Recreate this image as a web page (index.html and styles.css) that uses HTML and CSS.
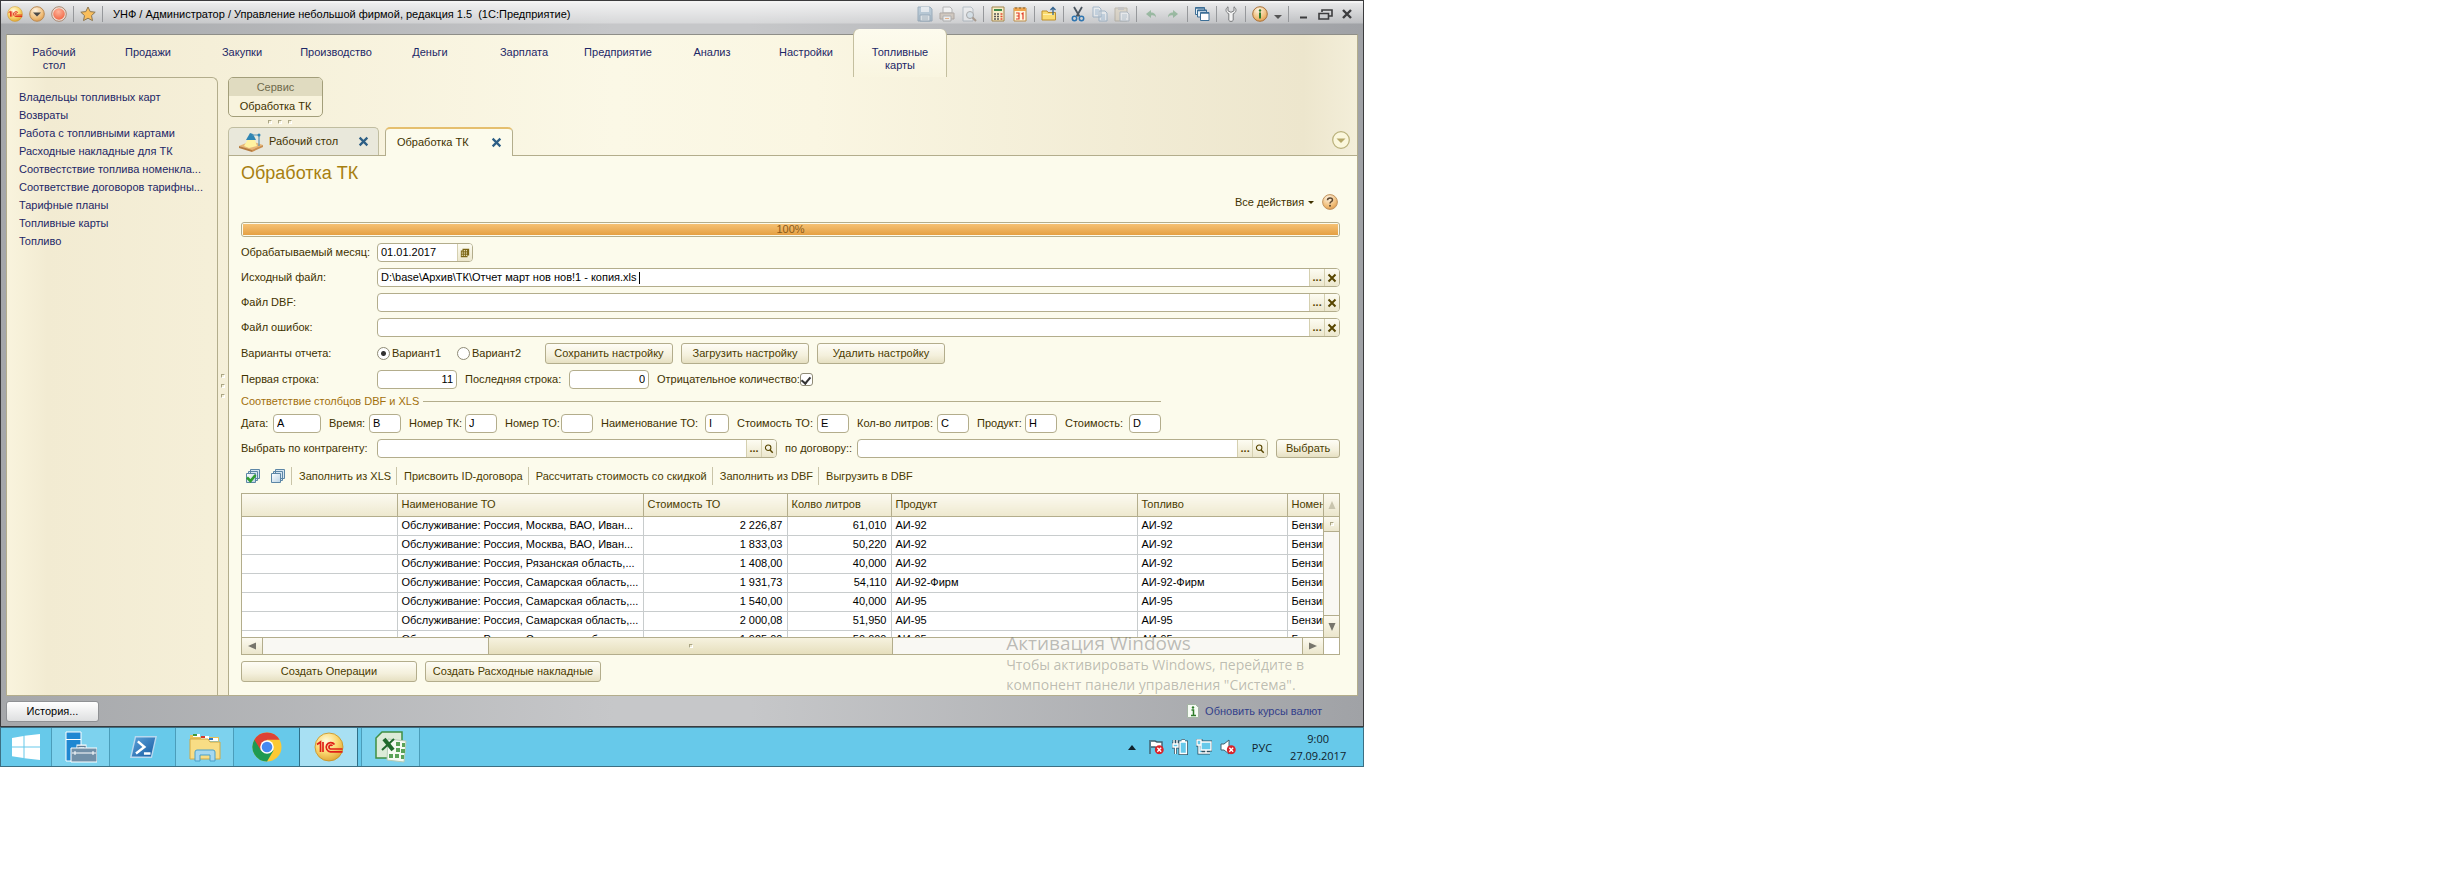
FILE: index.html
```html
<!DOCTYPE html>
<html lang="ru">
<head>
<meta charset="utf-8">
<title>УНФ / Администратор / Управление небольшой фирмой</title>
<link rel="stylesheet" href="styles.css">
</head>
<body>
<svg class="defs" aria-hidden="true">
  <defs>
    <radialGradient id="gold" cx=".4" cy=".3" r=".8"><stop offset="0" stop-color="#fffbe0"/><stop offset=".5" stop-color="#fbd870"/><stop offset="1" stop-color="#d99a28"/></radialGradient>
    <radialGradient id="amber" cx=".4" cy=".25" r=".9"><stop offset="0" stop-color="#fdf3e2"/><stop offset=".6" stop-color="#f0bd78"/><stop offset="1" stop-color="#d48a3c"/></radialGradient>
    <radialGradient id="red" cx=".45" cy=".3" r=".8"><stop offset="0" stop-color="#ffb49a"/><stop offset="1" stop-color="#ee5d3c"/></radialGradient>
    <linearGradient id="blue" x2="1" y2="1"><stop offset="0" stop-color="#5fa5dc"/><stop offset="1" stop-color="#1458a0"/></linearGradient>
    <linearGradient id="sheet" x2="1" y2="1"><stop offset="0" stop-color="#fff"/><stop offset="1" stop-color="#b9d2e4"/></linearGradient>
    <symbol id="i-cross" viewBox="0 0 10 10"><path d="M1.5 1.5l7 7M8.500 1.500l-7 7" fill="none" stroke="currentColor" stroke-width="2"/></symbol>
    <symbol id="i-lens" viewBox="0 0 12 12"><circle cx="5" cy="4.500" r="3.300" fill="none" stroke="currentColor" stroke-width="1.300"/><path d="M7 7l3.500 3.500" stroke="currentColor" stroke-width="1.800"/></symbol>
    <symbol id="i-err" viewBox="0 0 10 10"><circle cx="5" cy="5" r="4.700" fill="#d8232a"/><path d="M3 3l4 4M7 3L3 7" stroke="#fff" stroke-width="1.500"/></symbol>
    <symbol id="i-1c" viewBox="0 0 30 30"><circle cx="15" cy="15" r="14" fill="url(#gold)" stroke="#c88f20" stroke-width=".8"/><path d="M3 12.500l3.500-2.500v10M9 10v10M20.500 12.500a4.600 4.600 0 1 0-4 7.300h12M18.500 13.800a2 2 0 1 0-2 3.200h12" fill="none" stroke="#e02018" stroke-width="1.700"/></symbol>
  </defs>
</svg>

<div class="desktop">
  <div class="window">
    <header class="titlebar">
      <button class="tb" aria-label="1С"><svg viewBox="0 0 30 30"><use href="#i-1c"/></svg></button>
      <button class="tb" aria-label="Меню"><svg viewBox="0 0 16 16"><circle cx="8" cy="8" r="7.300" fill="url(#amber)" stroke="#b98a55"/><path d="M4 6.500h8L8 10.500z" fill="#4b4a48"/></svg></button>
      <button class="tb" aria-label="Остановить"><svg viewBox="0 0 16 16"><circle cx="8" cy="8" r="7.300" fill="#eee3da" stroke="#a8866f"/><circle cx="8" cy="8" r="5.800" fill="url(#red)"/></svg></button>
      <i class="tsep"></i>
      <button class="tb" aria-label="Избранное"><svg viewBox="0 0 16 16"><path d="M8 1l2.200 4.600 5 .6-3.700 3.400 1 5L8 12.200 3.500 14.600l1-5L.8 6.200l5-.6z" fill="#f9be5c" stroke="#8d7752"/></svg></button>
      <i class="tsep"></i>
      <h1 class="apptitle">УНФ / Администратор / Управление небольшой фирмой, редакция 1.5&nbsp; (1С:Предприятие)</h1>
      <button class="tb dim" aria-label="Сохранить"><svg viewBox="0 0 16 16"><path d="M1 1h12l2 2v12H1z" fill="#8fb0c8" stroke="#587b96"/><path d="M4 1h8v5H4z" fill="#e5eef5"/><path d="M3 9h10v6H3z" fill="#dfe8ee" stroke="#587b96"/><path d="M5 11h6M5 13h6" stroke="#7894a8"/></svg></button>
      <button class="tb dim" aria-label="Печать"><svg viewBox="0 0 16 16"><path d="M4 1h7l2 2v4H4z" fill="#fff" stroke="#888"/><path d="M1 7h14v6H1z" fill="#c6b5a3" stroke="#85776a"/><path d="M4 10h8v5H4z" fill="#fff" stroke="#888"/><path d="M6 12.500h4" stroke="#f08a38"/></svg></button>
      <button class="tb dim" aria-label="Просмотр"><svg viewBox="0 0 16 16"><path d="M2 1h8l2 2v12H2z" fill="#f1f3f5" stroke="#8a9aa8"/><circle cx="9" cy="9" r="3.500" fill="#cfe2ee" stroke="#777"/><path d="M11.500 11.500L15 15" stroke="#80644a" stroke-width="2"/></svg></button>
      <i class="tsep"></i>
      <button class="tb" aria-label="Калькулятор"><svg viewBox="0 0 16 16"><path d="M2 1h12v14H2z" fill="#f8edc6" stroke="#a2854e"/><path d="M4 3h8v2H4z" fill="#3f8a4a"/><path d="M4 8h2M7 8h2M4 10.500h2M7 10.500h2M4 13h2M7 13h2" stroke="#555" stroke-width="1.400"/><path d="M10.500 8h2M10.500 10.500h2M10.500 13h2" stroke="#e04a35" stroke-width="1.400"/></svg></button>
      <button class="tb" aria-label="Календарь"><svg viewBox="0 0 16 16"><path d="M2 2h12v13H2z" fill="#fff7df" stroke="#b98c4a"/><path d="M2 2h12v3H2z" fill="#f0a54c"/><path d="M4 1v2M8 1v2M12 1v2" stroke="#865f2d"/><path d="M4 7h3v6H4M4.500 10H7M9.500 8l1.500-1v6.500" fill="none" stroke="#e23c28" stroke-width="1.200"/></svg></button>
      <i class="tsep"></i>
      <button class="tb" aria-label="Открыть"><svg viewBox="0 0 16 16"><path d="M1 5h5l1 1.500h7.500V14H1z" fill="#fbdc70" stroke="#bd8f2c"/><path d="M2 8h11v1H2z" fill="#fff0b0"/><path d="M12 9V1.500M9.500 4L12 1.500 14.500 4" fill="none" stroke="#34648f" stroke-width="1.300"/></svg></button>
      <i class="tsep"></i>
      <button class="tb" aria-label="Вырезать"><svg viewBox="0 0 16 16"><path d="M4 1l5.500 9.500M12 1L6.500 10.500" stroke="#4b5660" stroke-width="1.800"/><circle cx="4.500" cy="12.500" r="2.200" fill="none" stroke="#2e75b0" stroke-width="1.500"/><circle cx="11.500" cy="12.500" r="2.200" fill="none" stroke="#2e75b0" stroke-width="1.500"/></svg></button>
      <button class="tb dim" aria-label="Копировать"><svg viewBox="0 0 16 16"><path d="M1 1h6l2 2v8H1zM7 5h6l2 2v8H7z" fill="#eef4f9" stroke="#6a8fb0"/><path d="M3 4h4M3 6h3M3 8h3M9 9h4M9 11h4M9 13h4" stroke="#6a9ac4"/></svg></button>
      <button class="tb dim" aria-label="Вставить"><svg viewBox="0 0 16 16"><path d="M1 2h12v13H1z" fill="#d9cdb4" stroke="#9b917d"/><path d="M4 1h6v3H4z" fill="#aaa"/><path d="M6 6h7l2 2v7H6z" fill="#f4f7fa" stroke="#8597a8"/><path d="M8 9h5M8 11h5M8 13h4" stroke="#9bb2c4"/></svg></button>
      <i class="tsep"></i>
      <button class="tb dim" aria-label="Назад"><svg viewBox="0 0 16 16"><path d="M3 8l5-4v2.500c3 0 5 1.500 5 5C12 9.500 10.500 9 8 9.500V12z" fill="#5f9c6c"/></svg></button>
      <button class="tb dim" aria-label="Вперед"><svg viewBox="0 0 16 16"><path d="M13 8L8 4v2.500c-3 0-5 1.500-5 5C4 9.500 5.500 9 8 9.500V12z" fill="#5f9c6c"/></svg></button>
      <i class="tsep"></i>
      <button class="tb" aria-label="Окна"><svg viewBox="0 0 16 16"><path d="M1.500 1.500h9v7h-9z" fill="#e4eef6" stroke="#3d6f96"/><path d="M3.500 4h9v7h-9z" fill="#e4eef6" stroke="#3d6f96"/><path d="M6.500 6.500h8.500v8H6.500z" fill="#fff" stroke="#3d6f96"/><path d="M1.500 2h9M3.500 4.500h9M6.500 7h8.500" stroke="#3d6f96" stroke-width="1.500"/></svg></button>
      <i class="tsep"></i>
      <button class="tb" aria-label="Сервис"><svg viewBox="0 0 16 16"><path d="M5 .8v4l3 1.500 3-1.500v-4c3 2 2.500 5.500-.8 7v6.500c-1 1.500-3.400 1.500-4.400 0V7.800C2.500 6.300 2 2.800 5 .8z" fill="#f2f2f2" stroke="#77797b"/></svg></button>
      <i class="tsep"></i>
      <button class="tb" aria-label="Справка"><svg viewBox="0 0 16 16"><circle cx="8" cy="8" r="7.300" fill="url(#amber)" stroke="#a9723a"/><circle cx="8" cy="4.500" r="1.200" fill="#2f7d2a"/><path d="M8 6.500v6" stroke="#2f7d2a" stroke-width="2"/></svg></button>
      <button class="tb narrow" aria-label="Еще"><svg viewBox="0 0 8 16"><path d="M0 9h8l-4 4z" fill="#555"/></svg></button>
      <i class="tsep"></i>
      <button class="tb" aria-label="Свернуть"><svg viewBox="0 0 16 16"><path d="M5 11.500h7" stroke="#3c3c3e" stroke-width="2"/></svg></button>
      <button class="tb" aria-label="Восстановить"><svg viewBox="0 0 16 16"><path d="M5 6V4h10v6h-3M2 7.500h9.500V13H2z" fill="none" stroke="#3c3c3e" stroke-width="1.600"/></svg></button>
      <button class="tb" aria-label="Закрыть"><svg viewBox="0 0 16 16"><path d="M4 4l8 8M12 4l-8 8" stroke="#3c3c3e" stroke-width="2.400"/></svg></button>
    </header>

    <div class="client">
      <nav class="sections">
        <a href="#">Рабочий стол</a><a href="#">Продажи</a><a href="#">Закупки</a><a href="#">Производство</a><a href="#">Деньги</a><a href="#">Зарплата</a><a href="#">Предприятие</a><a href="#">Анализ</a><a href="#">Настройки</a><a href="#" class="current">Топливные карты</a>
      </nav>
      <div class="body">
        <nav class="side">
          <a href="#">Владельцы топливных карт</a>
          <a href="#">Возвраты</a>
          <a href="#">Работа с топливными картами</a>
          <a href="#">Расходные накладные для ТК</a>
          <a href="#">Соотвестствие топлива номенкла...</a>
          <a href="#">Соответствие договоров тарифны...</a>
          <a href="#">Тарифные планы</a>
          <a href="#">Топливные карты</a>
          <a href="#">Топливо</a>
        </nav>
        <div class="grip grip-v"><i></i><i></i><i></i></div>
        <main class="work">
          <section class="service"><h2>Сервис</h2><a href="#">Обработка ТК</a></section>
          <div class="grip grip-h"><i></i><i></i><i></i></div>
          <div class="tabs">
            <div class="tab">
              <svg class="lamp" viewBox="0 0 24 20"><path d="M0 14l12-5 12 4-11 6z" fill="#e7b778"/><path d="M0 14v2l13 4v-2z" fill="#b57b3e"/><path d="M13 18v2l11-5v-2z" fill="#c98f50"/><path d="M9 7l7 1 2 6-8 2-5-2z" fill="#fff3a0"/><path d="M7 8l4-7 3 1 3 6z" fill="#2f86b4"/><path d="M13 3h7v11" fill="none" stroke="#5a93b5" stroke-width="1.200"/><circle cx="20" cy="3" r="1.500" fill="#2f86b4"/></svg>
              <span>Рабочий стол</span>
              <button class="x" aria-label="Закрыть вкладку"><svg viewBox="0 0 10 10"><use href="#i-cross"/></svg></button>
            </div>
            <div class="tab active">
              <span>Обработка ТК</span>
              <button class="x" aria-label="Закрыть вкладку"><svg viewBox="0 0 10 10"><use href="#i-cross"/></svg></button>
            </div>
            <button class="more" aria-label="Список вкладок"><svg viewBox="0 0 18 18"><circle cx="9" cy="9" r="8.300" fill="#fbf7dc" stroke="#b9b07a" stroke-width="1.200"/><path d="M4.500 7.500h9L9 12z" fill="#b5a868"/></svg></button>
          </div>

          <form class="page">
            <h2 class="pagetitle">Обработка ТК</h2>
            <div class="actions">
              <button type="button" class="plain">Все действия <span class="arrow"></span></button>
              <button type="button" class="help" aria-label="Справка"><svg viewBox="0 0 16 16"><circle cx="8" cy="8" r="7.400" fill="url(#amber)" stroke="#c29460"/><path d="M5.500 6.200c0-3 5-3 5-.2 0 1.800-2.500 1.600-2.500 3.500" fill="none" stroke="#5b4630" stroke-width="1.500"/><circle cx="8" cy="11.800" r="1" fill="#5b4630"/></svg></button>
            </div>
            <div class="progress"><div>100%</div></div>

            <div class="row">
              <label class="lead" for="month">Обрабатываемый месяц:</label>
              <div class="field date"><input id="month" value="01.01.2017"><button type="button" aria-label="Календарь"><svg viewBox="0 0 12 12"><path d="M3 1h8v8H9v2H1V3h2z" fill="#7a6414"/><path d="M2 5h1.500M4.500 5H6M7 5h1.500M2 7h1.500M4.500 7H6M7 7h1.500M2 9h1.500M4.500 9H6M7 9h1.500M4.500 3H6M7 3h1.500" stroke="#f6efc9"/></svg></button></div>
            </div>
            <div class="row">
              <label class="lead" for="src">Исходный файл:</label>
              <div class="field grow"><input id="src" value="D:\base\Архив\ТК\Отчет март нов нов!1 - копия.xls"><i class="caret"></i><button type="button">...</button><button type="button" aria-label="Очистить"><svg viewBox="0 0 10 10"><use href="#i-cross"/></svg></button></div>
            </div>
            <div class="row">
              <label class="lead" for="dbf">Файл DBF:</label>
              <div class="field grow"><input id="dbf"><button type="button">...</button><button type="button" aria-label="Очистить"><svg viewBox="0 0 10 10"><use href="#i-cross"/></svg></button></div>
            </div>
            <div class="row">
              <label class="lead" for="err">Файл ошибок:</label>
              <div class="field grow"><input id="err"><button type="button">...</button><button type="button" aria-label="Очистить"><svg viewBox="0 0 10 10"><use href="#i-cross"/></svg></button></div>
            </div>
            <div class="row">
              <span class="lead">Варианты отчета:</span>
              <label class="radio"><input type="radio" name="v" checked>Вариант1</label>
              <label class="radio"><input type="radio" name="v">Вариант2</label>
              <div class="btns"><button type="button" class="btn">Сохранить настройку</button><button type="button" class="btn">Загрузить настройку</button><button type="button" class="btn">Удалить настройку</button></div>
            </div>
            <div class="row">
              <label class="lead" for="first">Первая строка:</label>
              <div class="field num"><input id="first" value="11"></div>
              <label class="last" for="last">Последняя строка:</label>
              <div class="field num"><input id="last" value="0"></div>
              <label class="check">Отрицательное количество:<input type="checkbox" checked></label>
            </div>
            <fieldset class="group">
              <legend>Соответствие столбцов DBF и XLS</legend>
              <div class="cols">
                <label for="c1">Дата:</label><div class="field"><input id="c1" value="A"></div>
                <label for="c2">Время:</label><div class="field"><input id="c2" value="B"></div>
                <label for="c3">Номер ТК:</label><div class="field"><input id="c3" value="J"></div>
                <label for="c4">Номер ТО:</label><div class="field"><input id="c4"></div>
                <label for="c5">Наименование ТО:</label><div class="field"><input id="c5" value="I"></div>
                <label for="c6">Стоимость ТО:</label><div class="field"><input id="c6" value="E"></div>
                <label for="c7">Кол-во литров:</label><div class="field"><input id="c7" value="C"></div>
                <label for="c8">Продукт:</label><div class="field"><input id="c8" value="H"></div>
                <label for="c9">Стоимость:</label><div class="field"><input id="c9" value="D"></div>
              </div>
            </fieldset>
            <div class="row pick">
              <label class="lead" for="agent">Выбрать по контрагенту:</label>
              <div class="field agent"><input id="agent"><button type="button">...</button><button type="button" aria-label="Открыть"><svg viewBox="0 0 12 12"><use href="#i-lens"/></svg></button></div>
              <label class="by" for="deal">по договору::</label>
              <div class="field grow"><input id="deal"><button type="button">...</button><button type="button" aria-label="Открыть"><svg viewBox="0 0 12 12"><use href="#i-lens"/></svg></button></div>
              <button type="button" class="btn small">Выбрать</button>
            </div>

            <div class="toolbar">
              <button type="button" class="ico" aria-label="Отметить все"><svg viewBox="0 0 16 16"><path d="M5.500 1.500h9v9h-9zM3.500 3.500h9v9h-9z" fill="#d6e6f1" stroke="#5c86a6"/><path d="M1.500 5.500h9v9h-9z" fill="url(#sheet)" stroke="#5c86a6"/><path d="M2 9.500l3.500 3.500L10.500 7" fill="none" stroke="#2f9e2f" stroke-width="2.600"/></svg></button>
              <button type="button" class="ico" aria-label="Снять отметки"><svg viewBox="0 0 16 16"><path d="M5.500 1.500h9v9h-9zM3.500 3.500h9v9h-9z" fill="#d6e6f1" stroke="#5c86a6"/><path d="M1.500 5.500h9v9h-9z" fill="url(#sheet)" stroke="#5c86a6"/></svg></button>
              <button type="button" class="cmd">Заполнить из XLS</button>
              <button type="button" class="cmd">Присвоить ID-договора</button>
              <button type="button" class="cmd">Рассчитать стоимость со скидкой</button>
              <button type="button" class="cmd">Заполнить из DBF</button>
              <button type="button" class="cmd">Выгрузить в DBF</button>
            </div>

            <div class="grid">
              <div class="view">
                <table>
                  <colgroup><col class="w-a"><col class="w-b"><col class="w-c"><col class="w-d"><col class="w-b"><col class="w-e"><col class="w-e"></colgroup>
                  <thead><tr><th></th><th>Наименование ТО</th><th>Стоимость ТО</th><th>Колво литров</th><th>Продукт</th><th>Топливо</th><th>Номенклатура</th></tr></thead>
                  <tbody>
                    <tr><td></td><td>Обслуживание: Россия, Москва, ВАО, Иван...</td><td class="n">2 226,87</td><td class="n">61,010</td><td>АИ-92</td><td>АИ-92</td><td>Бензин</td></tr>
                    <tr><td></td><td>Обслуживание: Россия, Москва, ВАО, Иван...</td><td class="n">1 833,03</td><td class="n">50,220</td><td>АИ-92</td><td>АИ-92</td><td>Бензин</td></tr>
                    <tr><td></td><td>Обслуживание: Россия, Рязанская область,...</td><td class="n">1 408,00</td><td class="n">40,000</td><td>АИ-92</td><td>АИ-92</td><td>Бензин</td></tr>
                    <tr><td></td><td>Обслуживание: Россия, Самарская область,...</td><td class="n">1 931,73</td><td class="n">54,110</td><td>АИ-92-Фирм</td><td>АИ-92-Фирм</td><td>Бензин</td></tr>
                    <tr><td></td><td>Обслуживание: Россия, Самарская область,...</td><td class="n">1 540,00</td><td class="n">40,000</td><td>АИ-95</td><td>АИ-95</td><td>Бензин</td></tr>
                    <tr><td></td><td>Обслуживание: Россия, Самарская область,...</td><td class="n">2 000,08</td><td class="n">51,950</td><td>АИ-95</td><td>АИ-95</td><td>Бензин</td></tr>
                    <tr><td></td><td>Обслуживание: Россия, Самарская область,...</td><td class="n">1 925,00</td><td class="n">50,000</td><td>АИ-95</td><td>АИ-95</td><td>Бензин</td></tr>
                  </tbody>
                </table>
              </div>
              <div class="vbar">
                <button type="button" class="up" aria-label="Вверх"><svg viewBox="0 0 8 8"><path d="M4 0l3.500 8h-7z" fill="#c9c5ae"/></svg></button>
                <div class="vthumb"><i class="dot"></i></div>
                <div class="vtrack"></div>
                <button type="button" class="down" aria-label="Вниз"><svg viewBox="0 0 8 8"><path d="M4 8L.5 0h7z" fill="#77756c"/></svg></button>
              </div>
              <div class="hbar">
                <button type="button" aria-label="Влево"><svg viewBox="0 0 8 8"><path d="M0 4l8-3.500v7z" fill="#77756c"/></svg></button>
                <div class="htrack"></div>
                <div class="hthumb"><i class="dot"></i></div>
                <div class="htrack rest"></div>
                <button type="button" aria-label="Вправо"><svg viewBox="0 0 8 8"><path d="M8 4L0 .5v7z" fill="#77756c"/></svg></button>
              </div>
              <div class="corner"></div>
            </div>
            <div class="bottom"><button type="button" class="btn">Создать Операции</button><button type="button" class="btn">Создать Расходные накладные</button></div>
          </form>
        </main>
      </div>
    </div>

    <footer class="status">
      <button class="history">История...</button>
      <a href="#" class="rates"><svg viewBox="0 0 12 14"><path d="M.5.5h8l3 3v10H.5z" fill="#f6fbf4" stroke="#a4b5a4"/><circle cx="6" cy="3.500" r="1.200" fill="#2f7d2a"/><path d="M4.500 6H6.500v5M4 11.500h5" fill="none" stroke="#2f7d2a" stroke-width="1.500"/></svg>Обновить курсы валют</a>
    </footer>
    <div class="watermark"><p class="wm-title">Активация Windows</p><p>Чтобы активировать Windows, перейдите в компонент панели управления "Система".</p></div>
  </div>

  <div class="taskbar">
    <button class="task start" aria-label="Пуск"><svg viewBox="0 0 28 26"><path d="M0 4l11.500-2v10.500H0zM12.500 1.800L28 0v12.500H12.500zM0 13.500h11.500V24L0 22.300zM12.500 13.500H28V26l-15.500-1.800z" fill="#fff"/></svg></button>
    <button class="task run" aria-label="Диспетчер серверов"><svg viewBox="0 0 32 32"><path d="M1 1h15v29H1z" fill="#1f87d2" stroke="#fff"/><path d="M1 8.500h15" stroke="#fff"/><path d="M13 17v-2h7v2" fill="none" stroke="#fff" stroke-width="3"/><path d="M13 17.500v-2h7v2" fill="none" stroke="#5f7f99" stroke-width="1.500"/><path d="M6 17h26v14H6z" fill="#7290a8" stroke="#fff"/><path d="M7 22h24M10 20v4M28 20v4" stroke="#fff"/></svg></button>
    <button class="task wide" aria-label="PowerShell"><svg viewBox="0 0 32 32"><path d="M8 5h22l-5 22H3z" fill="url(#blue)" stroke="#b9d9ef" stroke-width="1.500"/><path d="M10.500 10l7 6-9 7M17 23h7" fill="none" stroke="#fff" stroke-width="2.600"/></svg></button>
    <button class="task run" aria-label="Проводник"><svg viewBox="0 0 32 32"><path d="M1 8V4h8l2 2h19v4z" fill="#e8c25a"/><path d="M4 3h7v3H4z" fill="#fff"/><path d="M12 5h8v3h-8zM20 7h9v3h-9z" fill="#fff"/><path d="M4 3h4v2H4z" fill="#3c9b3c"/><path d="M12 5h4v2h-4z" fill="#d2392f"/><path d="M20 7h4v2h-4z" fill="#2d78c5"/><path d="M1 8h18l2 3h10v17H1z" fill="#f8dd85" stroke="#d2a945"/><path d="M6 30V21q0-2 2-2h16q2 0 2 2v9h-5v-6H11v6z" fill="#a4d8f0" stroke="#4b9fc8"/></svg></button>
    <button class="task wide" aria-label="Chrome"><svg viewBox="0 0 30 30"><circle cx="15" cy="15" r="14.500" fill="#fcc934"/><path d="M15 15L2.400 7.750A14.500 14.500 0 0 0 15 29.500l6.500-11z" fill="#1e9a52"/><path d="M2.400 7.750A14.500 14.500 0 0 1 27.600 7.750H15L9 18.500z" fill="#dd4336"/><circle cx="15" cy="15" r="6.800" fill="#fff"/><circle cx="15" cy="15" r="5.300" fill="#4688f1"/></svg></button>
    <button class="task on" aria-label="1С:Предприятие"><svg viewBox="0 0 30 30"><use href="#i-1c"/></svg></button>
    <button class="task run" aria-label="Excel"><svg viewBox="0 0 32 32"><path d="M7 1h20v26H1V7z" fill="#dcebd8" stroke="#3f8f43" stroke-width="1.500"/><path d="M13 8l18 2-2 21-17-2z" fill="#f5faf3" stroke="#b5ccb5"/><path d="M21 11h4v4h-4zM27 12h3v4h-3zM21 17h4v4h-4zM26 18h4v4h-4zM14 23h4v4h-4zM20 23h4v4h-4zM26 24h3v4h-3z" fill="#5aa258"/><path d="M9 8l9 11" stroke="#20692c" stroke-width="4"/><path d="M19 8L7 19" stroke="#20692c" stroke-width="2"/></svg></button>
    <div class="tray">
      <svg class="t-up" viewBox="0 0 8 5"><path d="M0 5l4-5 4 5z" fill="#10222c"/></svg>
      <svg viewBox="0 0 16 16"><path d="M2 15V1M3 2h4l2 1h5v6H9L7 8H3" fill="#fff" stroke="#41606e" stroke-width="1.400"/><use href="#i-err" x="6.500" y="6" width="9.500" height="9.500"/></svg>
      <svg viewBox="0 0 16 16"><path d="M8 3h6.500v11.500H8zM9.500 1.500h3.500M2 1v4M5 1v4M1 5h5v3H1zM3.500 8v7" fill="none" stroke="#2f5262" stroke-width="3"/><path d="M8 3h6.500v11.500H8zM9.500 1.500h3.500M2 1v4M5 1v4M1 5h5v3H1zM3.500 8v7" fill="#67c9ea" stroke="#fff" stroke-width="1.400"/></svg>
      <svg viewBox="0 0 16 16"><path d="M5 3h10v8H5zM10 11v3M6 14h8M1 1h4v5H1zM3 6v8h3" fill="none" stroke="#2f5262" stroke-width="3"/><path d="M5 3h10v8H5zM10 11v3M6 14h8M1 1h4v5H1zM3 6v8h3" fill="#67c9ea" stroke="#fff" stroke-width="1.400"/></svg>
      <svg viewBox="0 0 16 16"><path d="M1 5h3l5-4v14l-5-4H1z" fill="#fff" stroke="#41606e"/><use href="#i-err" x="6.500" y="6" width="9.500" height="9.500"/></svg>
      <span class="lang">РУС</span>
      <div class="clock">9:00<br>27.09.2017</div>
    </div>
  </div>
</div>
</body>
</html>
```

FILE: styles.css
```css
* { box-sizing: border-box; }
body { margin: 0; background: #fff; font-family: "Liberation Sans", Arial, sans-serif; font-size: 11px; line-height: 13px; color: #3f3200; }
h1, h2, p { margin: 0; font-weight: normal; font-size: 11px; }
button, input { font: inherit; color: inherit; margin: 0; padding: 0; border: 0; background: none; }
button { white-space: nowrap; }
a { color: #1d2767; text-decoration: none; }
svg { display: block; }
.defs { position: absolute; width: 0; height: 0; }

.desktop { width: 55.68%; min-width: 1200px; }
.window { position: relative; padding: 0 5px; border: 1px solid #3b3b3d; background: linear-gradient(90deg, #a5a7aa, #c6c7c9 45%, #c6c7c9 55%, #a0a2a6); }

.titlebar { display: flex; align-items: center; gap: 6px; height: 33px; margin: 0 -5px; padding: 0 8px 9px 6px; border-top: 2px solid #f4f4f4; background: linear-gradient(rgba(255,255,255,.75), rgba(255,255,255,.3) 20px, rgba(255,255,255,0) 21px); }
.tb { flex: none; width: 16px; height: 16px; }
.tb svg { width: 100%; height: 16px; }
.tb.narrow { width: 8px; }
.tb.dim { opacity: .5; }
.tsep { width: 1px; height: 16px; background: #96989b; }
.apptitle { flex: 1; padding-left: 4px; color: #000; white-space: nowrap; }

.client { border: 1px solid #b3ad8c; border-top-color: #8e8e88; background: linear-gradient(90deg, #f9f4dd, #f2ebd2 3%, #f5efd8 15%, #fbf8e6 45%, #faf6e2 60%, #ede6cd 96%, #f3eed9); }
.sections { display: flex; height: 42px; }
.sections a { width: 94px; padding: 11px 22px 0; display: flex; justify-content: center; text-align: center; }
.sections .current { margin-top: -6px; padding-top: 17px; border: 1px solid #c4bf9f; border-width: 0 1px; border-radius: 6px 6px 0 0; background: linear-gradient(#fdfbee, #f9f5e0); }
.body { display: flex; }
.side { width: 211px; padding: 10px 4px 0 12px; display: flex; flex-direction: column; border: 1px solid #b3ad8c; border-width: 1px 1px 0 0; border-radius: 0 6px 0 0; }
.side a { line-height: 18px; white-space: nowrap; }
.grip { display: flex; justify-content: center; align-items: center; }
.grip i, .dot { width: 4px; height: 4px; border: 1px solid #aaa583; border-right-color: #fff; border-bottom-color: #fff; }
.grip-v { width: 10px; flex-direction: column; gap: 6px; }
.grip-h { width: 95px; height: 10px; margin-left: 4px; gap: 6px; }
.work { flex: 1; min-width: 0; }
.service { width: 95px; border: 1px solid #a39e7a; border-radius: 5px; overflow: hidden; background: #f8f3dd; text-align: center; }
.service h2 { line-height: 18px; background: #e0dbc0; color: #6f6a4c; }
.service a { display: block; line-height: 20px; color: #3f3200; }

.tabs { display: flex; align-items: flex-end; height: 28px; }
.tab { display: flex; align-items: center; height: 28px; width: 151px; padding: 0 9px 0 10px; border: 1px solid #c0bda0; border-bottom: 0; border-radius: 5px 5px 0 0; background: #e9e8db; }
.tab.active { position: relative; width: 128px; height: 29px; margin: 0 auto -1px 6px; padding: 0 10px 0 11px; border-color: #b3ad8c; border-top: 2px solid #e5bf6e; background: #fcfbec; }
.tab span { flex: 1; }
.lamp { width: 24px; height: 20px; margin-right: 6px; }
.x { width: 11px; height: 11px; color: #2d5f86; }
.more { width: 18px; height: 18px; margin: 0 7px 6px 0; }

.page { display: flex; flex-direction: column; gap: 6px; padding: 8px 17px 13px 12px; border: 1px solid #b3ad8c; border-width: 1px 0 0 1px; background: #fcfbec; }
.pagetitle { font-size: 18px; line-height: 18px; color: #a77f10; }
.actions { display: flex; justify-content: flex-end; align-items: center; gap: 8px; height: 16px; margin-top: 6px; padding: 0 2px 0 0; }
.arrow { display: inline-block; margin-left: 1px; border: 3px solid transparent; border-top-color: #3f3200; border-bottom: 0; vertical-align: 2px; }
.help { width: 16px; height: 16px; }
.progress { margin: 6px 0 0; padding: 1px; border: 1px solid #b3ad8c; border-radius: 3px; text-align: center; line-height: 11px; color: #8a5a18; }
.progress div { height: 11px; background: linear-gradient(#f5c174, #e5a043); }

.row { display: flex; align-items: center; }
.lead { width: 136px; white-space: nowrap; }
.field { position: relative; display: flex; height: 19px; border: 1px solid #b3ad8c; border-radius: 4px; overflow: hidden; background: #fff; }
.field input { flex: 1; min-width: 0; width: 100%; padding: 0 3px; color: #000; outline: 0; }
.field button { width: 15px; border-left: 1px solid #d5d0b0; background: linear-gradient(#fdfcf2, #ece7cd); color: #584600; font-weight: bold; line-height: 15px; }
.field button svg { width: 10px; height: 10px; margin: auto; }
.grow { flex: 1; }
.caret { position: absolute; left: 261px; top: 3px; width: 1px; height: 12px; background: #000; }
.date { width: 96px; }
.num { width: 80px; }
.num input { text-align: right; }
.last { width: 112px; padding-left: 8px; white-space: nowrap; }
.radio { display: flex; align-items: center; gap: 2px; width: 80px; color: #3f3200; }
.radio input { appearance: none; width: 13px; height: 13px; border: 1px solid #8f8b76; border-radius: 50%; background: #fff; }
.radio input:checked { background: radial-gradient(circle, #333 2px, #fff 3px); }
.check { display: flex; align-items: center; padding-left: 8px; width: 158px; white-space: nowrap; }
.check input { appearance: none; flex: none; margin-left: auto; width: 13px; height: 13px; border: 1px solid #8f8b76; border-radius: 3px; background: #fff; }
.check input:checked::after { content: ""; display: block; width: 4px; height: 7px; margin: 1px auto 0; border: solid #333; border-width: 0 2px 2px 0; transform: rotate(40deg); }
.btns { display: flex; gap: 8px; margin-left: 8px; }
.btn { width: 128px; height: 21px; border: 1px solid #b3ad8c; border-radius: 3px; background: linear-gradient(#fefdf6, #f4f0dc 60%, #e6e0c2); color: #4b3c00; }
.btn.small { width: 64px; height: 19px; margin-left: 8px; }

.group { width: 920px; min-width: 0; margin: 0; padding: 6px 0 0; border: 0; border-top: 1px solid #b3ad8c; }
.group legend { padding: 0 4px 0 0; color: #a2700c; }
.cols { display: grid; grid-template-columns: 32px 48px 48px 32px 64px 32px 64px 32px 112px 24px 88px 32px 88px 32px 56px 32px 72px 32px; align-items: center; }
.cols label { padding-left: 8px; white-space: nowrap; }
.cols label:first-child { padding-left: 0; }
.agent { width: 400px; }
.by { width: 80px; padding-left: 8px; white-space: nowrap; }

.toolbar { display: flex; align-items: center; height: 20px; margin: 2px 0 1px; }
.ico { width: 16px; height: 16px; margin: 0 5px 0 4px; }
.cmd { height: 18px; padding: 0 5px 0 7px; border-left: 1px solid #c9c4a8; color: #4b3c00; }

.grid { display: grid; grid-template-columns: minmax(0, 1fr) 16px; border: 1px solid #b3ad8c; background: #fff; }
.view { height: 143px; overflow: hidden; }
table { width: 1195px; table-layout: fixed; border-collapse: collapse; }
.w-a { width: 155px; } .w-b { width: 246px; } .w-c { width: 144px; } .w-d { width: 104px; } .w-e { width: 150px; }
th { height: 22px; padding: 0 4px; text-align: left; font-weight: normal; color: #4b3c00; background: linear-gradient(#fcfaf0, #eee9cf); border-right: 1px solid #b3ad8c; border-bottom: 1px solid #b3ad8c; }
td { height: 19px; padding: 0 4px; color: #000; white-space: nowrap; border-right: 1px solid #c8cccd; border-bottom: 1px solid #c8cccd; }
.n { text-align: right; }
.vbar { display: flex; flex-direction: column; border-left: 1px solid #b3ad8c; background: #f9f8f3; }
.vbar button, .hbar button, .vthumb, .hthumb { display: flex; align-items: center; justify-content: center; background: linear-gradient(#fcfaf0, #ebe6cc); }
.vbar svg, .hbar svg { width: 8px; height: 8px; }
.up { height: 22px; }
.vthumb { height: 16px; border: 1px solid #b3ad8c; border-width: 1px 0; }
.vtrack { flex: 1; }
.down { height: 22px; border-top: 1px solid #b3ad8c; }
.hbar { display: flex; height: 17px; border-top: 1px solid #b3ad8c; background: #f9f8f3; }
.hbar button { width: 21px; border-right: 1px solid #b3ad8c; }
.hbar button:last-child { border-right: 0; border-left: 1px solid #b3ad8c; }
.htrack { flex: 226; }
.hthumb { flex: 404; border: 1px solid #b3ad8c; border-width: 0 1px; background: linear-gradient(#f6f2df, #e6dfbd); }
.htrack.rest { flex: 410; }
.corner { border: 1px solid #b3ad8c; border-width: 1px 0 0 1px; }
.bottom { display: flex; gap: 8px; }
.bottom .btn { width: 176px; }

.status { display: flex; align-items: center; justify-content: space-between; height: 30px; padding-right: 36px; }
.history { width: 93px; height: 21px; border: 1px solid #8f9194; border-radius: 3px; background: linear-gradient(#fff, #dedfe0); color: #000; }
.rates { display: flex; align-items: center; gap: 6px; color: #333f8a; }
.rates svg { width: 12px; height: 14px; }
.watermark { position: absolute; right: 45px; bottom: 31px; width: 312px; font-family: "Open Sans", sans-serif; color: rgba(110,110,105,.45); pointer-events: none; }
.watermark p { font-size: 14px; line-height: 20px; }
.watermark .wm-title { font-size: 19px; line-height: 24px; }

.taskbar { display: flex; height: 40px; border: 1px solid #3c6f83; background: #67c9ea; font-family: "Open Sans", sans-serif; color: #10222c; }
.task { display: flex; align-items: center; justify-content: center; width: 59px; }
.task svg { width: 32px; height: 32px; }
.task.start { width: 50px; }
.start svg { width: 28px; height: 26px; }
.task.wide { width: 65px; }
.task.wide svg { width: 30px; height: 30px; }
.task.on svg { width: 30px; height: 30px; }
.task.run { border: 1px solid #4b9dba; border-width: 0 1px; background: #7dd2ee; }
.task.on { margin-right: 3px; border: 1px solid #2f7088; border-width: 0 1px; background: #a8e0f3; }
.tray { display: flex; align-items: center; gap: 8px; margin-left: auto; padding-right: 13px; }
.tray svg { width: 16px; height: 16px; }
.tray .t-up { width: 8px; height: 5px; margin-right: 4px; }
.lang { margin: 0 6px 0 8px; }
.clock { width: 64px; text-align: center; line-height: 17px; }
```
